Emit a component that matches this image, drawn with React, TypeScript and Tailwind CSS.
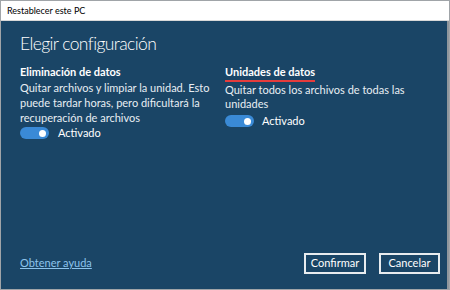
export default function App() {
  const font = { fontFamily: 'Lato, "Open Sans", sans-serif' };
  const Toggle = () => (
    <div className="w-[29px] h-[12px] rounded-full bg-[#3a8ad6] flex items-center justify-end pr-[3px]">
      <div className="w-[7px] h-[7px] rounded-full bg-white" />
    </div>
  );
  return (
    <div className="w-[450px] h-[290px] border border-[#a0a4a8] flex flex-col bg-[#1a4566]" style={font}>
      <div className="h-[20px] bg-white flex items-center pl-[6px] text-[9px] text-black border-b border-[#d8d8d8]">
        Restablecer este PC
      </div>
      <div className="flex-1 flex flex-col pl-[19px] pr-[7px] text-white border-r-[2px] border-[#8f969c]">
        <div className="mt-[12px] text-[17.5px] font-light leading-[22px] tracking-[-0.6px]">Elegir configuración</div>
        <div className="flex mt-[9px]">
          <div className="w-[205px]">
            <div className="text-[11px] font-bold leading-[15px]">Eliminación de datos</div>
            <div className="text-[11px] leading-[15px] mt-[1px] text-[#e8eef3]">
              Quitar archivos y limpiar la unidad. Esto puede tardar horas, pero dificultará la recuperación de archivos
            </div>
            <div className="flex items-center gap-[9px] mt-[0px]">
              <Toggle />
              <span className="text-[11px]">Activado</span>
            </div>
          </div>
          <div className="flex-1">
            <div className="text-[11px] font-bold leading-[15px] w-fit border-b-[2px] border-[#e53c3c] pb-[1px]">Unidades de datos</div>
            <div className="text-[11px] leading-[14px] mt-[1px] text-[#e8eef3] w-[180px]">
              Quitar todos los archivos de todas las unidades
            </div>
            <div className="flex items-center gap-[8px] mt-[2px]">
              <Toggle />
              <span className="text-[11px]">Activado</span>
            </div>
          </div>
        </div>
        <div className="flex-1" />
        <div className="flex items-center mb-[15px]">
          <a className="text-[11px] text-[#8cc3ec] underline">Obtener ayuda</a>
          <div className="flex-1" />
          <div className="w-[62px] h-[21px] border-[2px] border-[#e8ecef] flex items-center justify-center text-[11px]">Confirmar</div>
          <div className="w-[61px] h-[21px] ml-[13px] border-[2px] border-[#e8ecef] flex items-center justify-center text-[11px]">Cancelar</div>
        </div>
      </div>
    </div>
  );
}
